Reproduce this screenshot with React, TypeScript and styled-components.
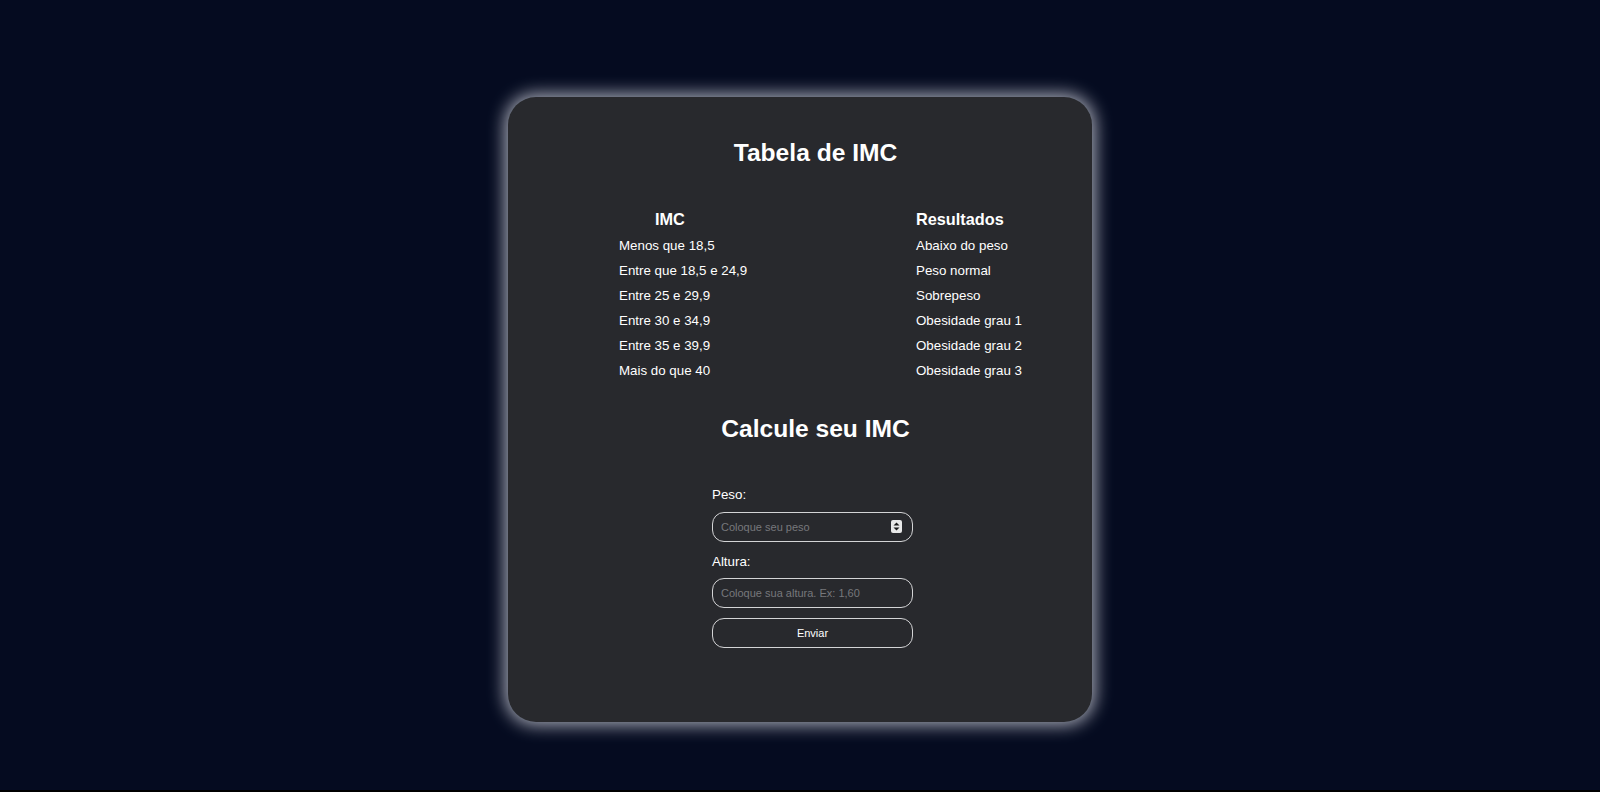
import React from 'react';
import styled, { createGlobalStyle } from 'styled-components';

const GlobalStyle = createGlobalStyle`
  html {
    background-color: #000;
  }

  body {
    margin: 0;
    font-family: "Liberation Sans", Arial, sans-serif;
  }
`;

const rows: Array<[string, string]> = [
  ['Menos que 18,5', 'Abaixo do peso'],
  ['Entre que 18,5 e 24,9', 'Peso normal'],
  ['Entre 25 e 29,9', 'Sobrepeso'],
  ['Entre 30 e 34,9', 'Obesidade grau 1'],
  ['Entre 35 e 39,9', 'Obesidade grau 2'],
  ['Mais do que 40', 'Obesidade grau 3'],
];

const Page = styled.main`
  box-sizing: border-box;
  height: 790px;
  padding-top: 97px;
  background-color: #050b20;
  display: flex;
  justify-content: center;
  align-items: flex-start;
`;

const Card = styled.section`
  box-sizing: border-box;
  width: 584px;
  height: 625px;
  padding: 42px 0 0 31px;
  border-radius: 28px;
  background-color: #28292d;
  box-shadow: 0 0 17px 3px rgba(218, 220, 230, 0.78);
  color: #fff;
  display: flex;
  flex-direction: column;
  align-items: center;
`;

const Heading = styled.h2<{ $top?: number; $bottom?: number }>`
  margin: ${({$top = 0}) => $top}px 0 ${({$bottom = 0}) => $bottom}px;
  font-size: 24.6px;
  line-height: 28px;
  font-weight: 700;
`;

const Table = styled.div`
  align-self: stretch;
  padding-left: 80px;
  display: grid;
  grid-template-columns: 297px auto;
`;

const Column = styled.div`
  display: flex;
  flex-direction: column;
`;

const ColumnHeader = styled.div<{ $indent?: number }>`
  margin-bottom: 2px;
  padding-left: ${({$indent = 0}) => $indent}px;
  font-size: 16.3px;
  line-height: 25px;
  font-weight: 700;
`;

const Cell = styled.div`
  font-size: 13.33px;
  line-height: 24.9px;
`;

const Form = styled.form`
  width: 201px;
  margin: 44px 6px 0 0;
  display: flex;
  flex-direction: column;
`;

const Label = styled.label<{ $gap: number }>`
  margin-bottom: ${({$gap}) => $gap}px;
  font-size: 13.33px;
  line-height: 16px;
`;

const Field = styled.div`
  position: relative;
`;

const fieldBox = `
  box-sizing: border-box;
  width: 100%;
  height: 30px;
  border: 1px solid #d4d4d6;
  border-radius: 12px;
  background: transparent;
  color: #fff;
  font-family: "Liberation Sans", Arial, sans-serif;
  font-size: 11px;
  outline: none;
`;

const Input = styled.input<{ $gap: number }>`
  ${fieldBox}
  display: block;
  margin: 0 0 ${({$gap}) => $gap}px;
  padding: 0 8px;
  caret-color: #fff;

  &::placeholder {
    color: #77787c;
  }
`;

const Spinner = styled.span`
  position: absolute;
  top: 8px;
  right: 11px;
  width: 11px;
  height: 13px;
  border-radius: 2px;
  background-color: #e8e8e8;
  display: flex;
  align-items: center;
  justify-content: center;
`;

const SubmitButton = styled.button`
  ${fieldBox}
  cursor: pointer;
  text-align: center;
`;

export default function App() {
  return (
    <>
      <GlobalStyle/>
      <Page>
        <Card>
          <Heading $bottom={40}>Tabela de IMC</Heading>

          <Table>
            <Column>
              <ColumnHeader $indent={36}>IMC</ColumnHeader>
              {rows.map(([range]) => <Cell key={range}>{range}</Cell>)}
            </Column>
            <Column>
              <ColumnHeader>Resultados</ColumnHeader>
              {rows.map(([, result]) => <Cell key={result}>{result}</Cell>)}
            </Column>
          </Table>

          <Heading $top={32}>Calcule seu IMC</Heading>

          <Form onSubmit={(e) => e.preventDefault()}>
            <Label htmlFor="peso" $gap={9}>Peso:</Label>
            <Field>
              <Input id="peso" type="text" inputMode="decimal" placeholder="Coloque seu peso" autoFocus $gap={12}/>
              <Spinner aria-hidden>
                <svg width="7" height="9" viewBox="0 0 7 9">
                  <path d="M3.5 0.5 L6.5 3.6 H0.5 Z" fill="#1a1a1a"/>
                  <path d="M3.5 8.5 L6.5 5.4 H0.5 Z" fill="#1a1a1a"/>
                </svg>
              </Spinner>
            </Field>

            <Label htmlFor="altura" $gap={8}>Altura:</Label>
            <Input id="altura" type="text" placeholder="Coloque sua altura. Ex: 1,60" $gap={10}/>

            <SubmitButton type="submit">Enviar</SubmitButton>
          </Form>
        </Card>
      </Page>
    </>
  );
}
